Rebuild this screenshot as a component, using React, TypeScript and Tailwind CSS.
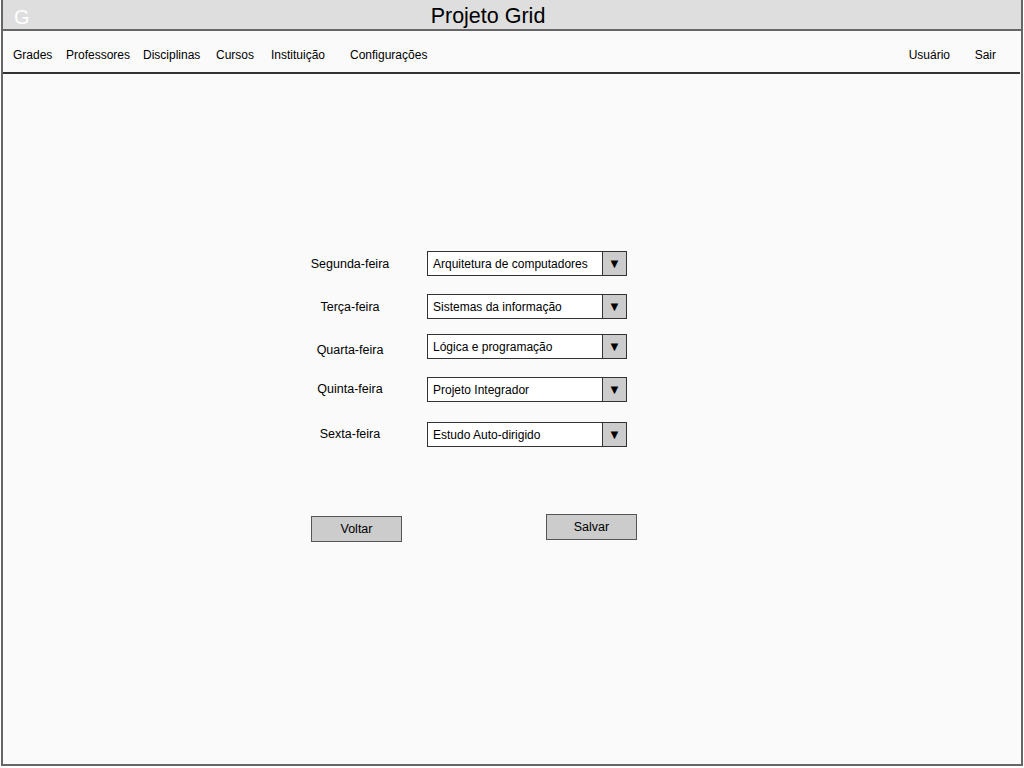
import React from "react";

const font = { fontFamily: '"Comic Sans MS", "Liberation Sans", sans-serif' };

const navLeft = [
  { label: "Grades", w: "w-[53px]" },
  { label: "Professores", w: "w-[77px]" },
  { label: "Disciplinas", w: "w-[73px]" },
  { label: "Cursos", w: "w-[55px]" },
  { label: "Instituição", w: "w-[79px]" },
  { label: "Configurações", w: "w-[90px]" },
];

const dias = [
  { dia: "Segunda-feira", disc: "Arquitetura de computadores", mt: "mt-[177px]", shift: "translate-y-[1px]" },
  { dia: "Terça-feira", disc: "Sistemas da informação", mt: "mt-[18px]", shift: "translate-y-[1px]" },
  { dia: "Quarta-feira", disc: "Lógica e programação", mt: "mt-[15px]", shift: "translate-y-[4px]" },
  { dia: "Quinta-feira", disc: "Projeto Integrador", mt: "mt-[18px]", shift: "" },
  { dia: "Sexta-feira", disc: "Estudo Auto-dirigido", mt: "mt-[20px]", shift: "" },
];

const Select = ({ value }: { value: string }) => {
  return (
    <div className="flex h-[25px] w-[200px] border border-[#333] bg-white">
      <div className="flex flex-1 items-center pl-[5px] text-[12px] text-black">{value}</div>
      <div className="flex w-[24px] items-center justify-center border-l border-[#333] bg-[#cccccc] text-[13px] text-black">
        ▼
      </div>
    </div>
  );
};

const App = () => {
  return (
    <div style={font} className="h-[768px] w-[1024px] bg-white">
      <div className="ml-[1px] h-[766px] w-[1022px] border-x-2 border-b-2 border-[#666] bg-[#fafafa]">
        {/* barra de titulo */}
        <div className="relative flex h-[31px] items-center justify-center border-b-2 border-[#666] bg-[#dedede] pr-[48px] pt-[4px]">
          <span className="absolute left-[11px] top-[2px] text-[20px] text-white">G</span>
          <span className="text-[21.5px] text-black">Projeto Grid</span>
        </div>

        {/* menu */}
        <div className="mr-[1px] flex h-[43px] items-center border-b-2 border-[#333] pl-[10px] pr-[24px] pt-[6px] text-[12px] text-black">
          {navLeft.map((n) => (
            <span key={n.label} className={n.w}>
              {n.label}
            </span>
          ))}
          <span className="ml-auto w-[66px]">Usuário</span>
          <span>Sair</span>
        </div>

        {/* formulario */}
        <div className="flex flex-col">
          {dias.map((d) => (
            <div key={d.dia} className={`flex h-[25px] items-center ${d.mt}`}>
              <div className={`ml-[297px] w-[100px] text-center text-[12.5px] text-black ${d.shift}`}>{d.dia}</div>
              <div className="ml-[27px]">
                <Select value={d.disc} />
              </div>
            </div>
          ))}

          <div className="ml-[308px] mt-[67px] flex items-start">
            <button className="mt-[2px] h-[26px] w-[91px] border border-[#555] bg-[#cccccc] text-[12.5px] text-black">
              Voltar
            </button>
            <button className="ml-[144px] h-[26px] w-[91px] border border-[#555] bg-[#cccccc] text-[12.5px] text-black">
              Salvar
            </button>
          </div>
        </div>
      </div>
    </div>
  );
};

export default App;
